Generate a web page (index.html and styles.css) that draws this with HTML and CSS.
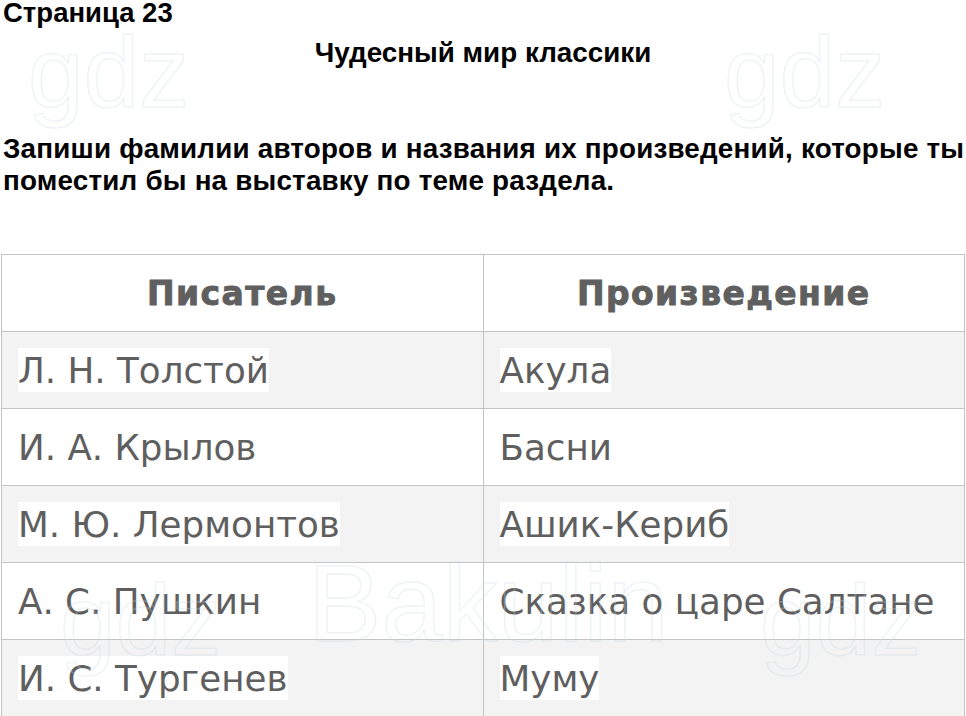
FILE: index.html
```html
<!DOCTYPE html>
<html lang="ru">
<head>
<meta charset="utf-8">
<title>Страница 23</title>
<link rel="stylesheet" href="styles.css">
</head>
<body>
<div class="page">
  <h1 class="page-title">Страница 23</h1>
  <h2 class="chapter">Чудесный мир классики</h2>
  <p class="task">Запиши фамилии авторов и названия их произведений, которые ты поместил бы на выставку по теме раздела.</p>
  <table class="answers">
    <thead>
      <tr><th>Писатель</th><th>Произведение</th></tr>
    </thead>
    <tbody>
      <tr class="odd"><td><span class="hl">Л. Н. Толстой</span></td><td><span class="hl">Акула</span></td></tr>
      <tr><td><span>И. А. Крылов</span></td><td><span>Басни</span></td></tr>
      <tr class="odd"><td><span class="hl">М. Ю. Лермонтов</span></td><td><span class="hl">Ашик-Кериб</span></td></tr>
      <tr><td><span>А. С. Пушкин</span></td><td><span>Сказка о царе Салтане</span></td></tr>
      <tr class="odd"><td><span class="hl">И. С. Тургенев</span></td><td><span class="hl">Муму</span></td></tr>
    </tbody>
  </table>
  <div class="wm wm-1" aria-hidden="true">gdz</div>
  <div class="wm wm-2" aria-hidden="true">gdz</div>
  <div class="wm wm-3" aria-hidden="true">Bakulin</div>
  <div class="wm wm-4" aria-hidden="true">gdz</div>
  <div class="wm wm-5" aria-hidden="true">gdz</div>
</div>
</body>
</html>
```
FILE: styles.css
```css
html, body {
  margin: 0;
  padding: 0;
  background: #ffffff;
}
.page {
  position: relative;
  width: 966px;
  height: 716px;
  overflow: hidden;
  font-family: "Liberation Sans", Arial, sans-serif;
  color: #000;
}
.page-title {
  margin: 0;
  padding: 0 0 0 3px;
  font-size: 27.5px;
  line-height: 25px;
  font-weight: bold;
}
.chapter {
  margin: 12px 0 0;
  font-size: 27.8px;
  line-height: 32px;
  font-weight: bold;
  text-align: center;
}
.task {
  margin: 64px 0 0;
  padding-left: 3px;
  font-size: 27.8px;
  letter-spacing: 0.2px;
  line-height: 32px;
  font-weight: bold;
}
.answers {
  margin: 57px 0 0 1px;
  width: 964px;
  border-collapse: collapse;
  table-layout: fixed;
  font-family: "DejaVu Sans", Verdana, sans-serif;
  color: #5f5f5f;
}
.answers th,
.answers td {
  border: 1px solid #c4c4c4;
  height: 77px;
  padding: 0 0 0 16px;
  box-sizing: border-box;
  vertical-align: middle;
}
.answers th {
  font-size: 33px;
  letter-spacing: 1.4px;
  font-weight: bold;
  -webkit-text-stroke: 0.9px #5f5f5f;
  text-align: center;
  padding: 0;
}
.answers td {
  font-size: 35.7px;
  text-align: left;
  white-space: nowrap;
}
.answers tr.odd td {
  background: #f3f3f3;
}
.hl {
  background: #ffffff;
  padding: 2px 0 1px;
}
.wm {
  position: absolute;
  font-family: "Liberation Sans", Arial, sans-serif;
  color: transparent;
  -webkit-text-stroke: 1.5px rgba(200, 215, 225, 0.3);
  pointer-events: none;
  user-select: none;
  line-height: 1;
}
.wm-1 { left: 28px; top: 22px; font-size: 100px; }
.wm-2 { left: 724px; top: 22px; font-size: 100px; }
.wm-3 { left: 308px; top: 548px; font-size: 110px; }
.wm-4 { left: 60px; top: 570px; font-size: 100px; }
.wm-5 { left: 760px; top: 570px; font-size: 100px; }
```
